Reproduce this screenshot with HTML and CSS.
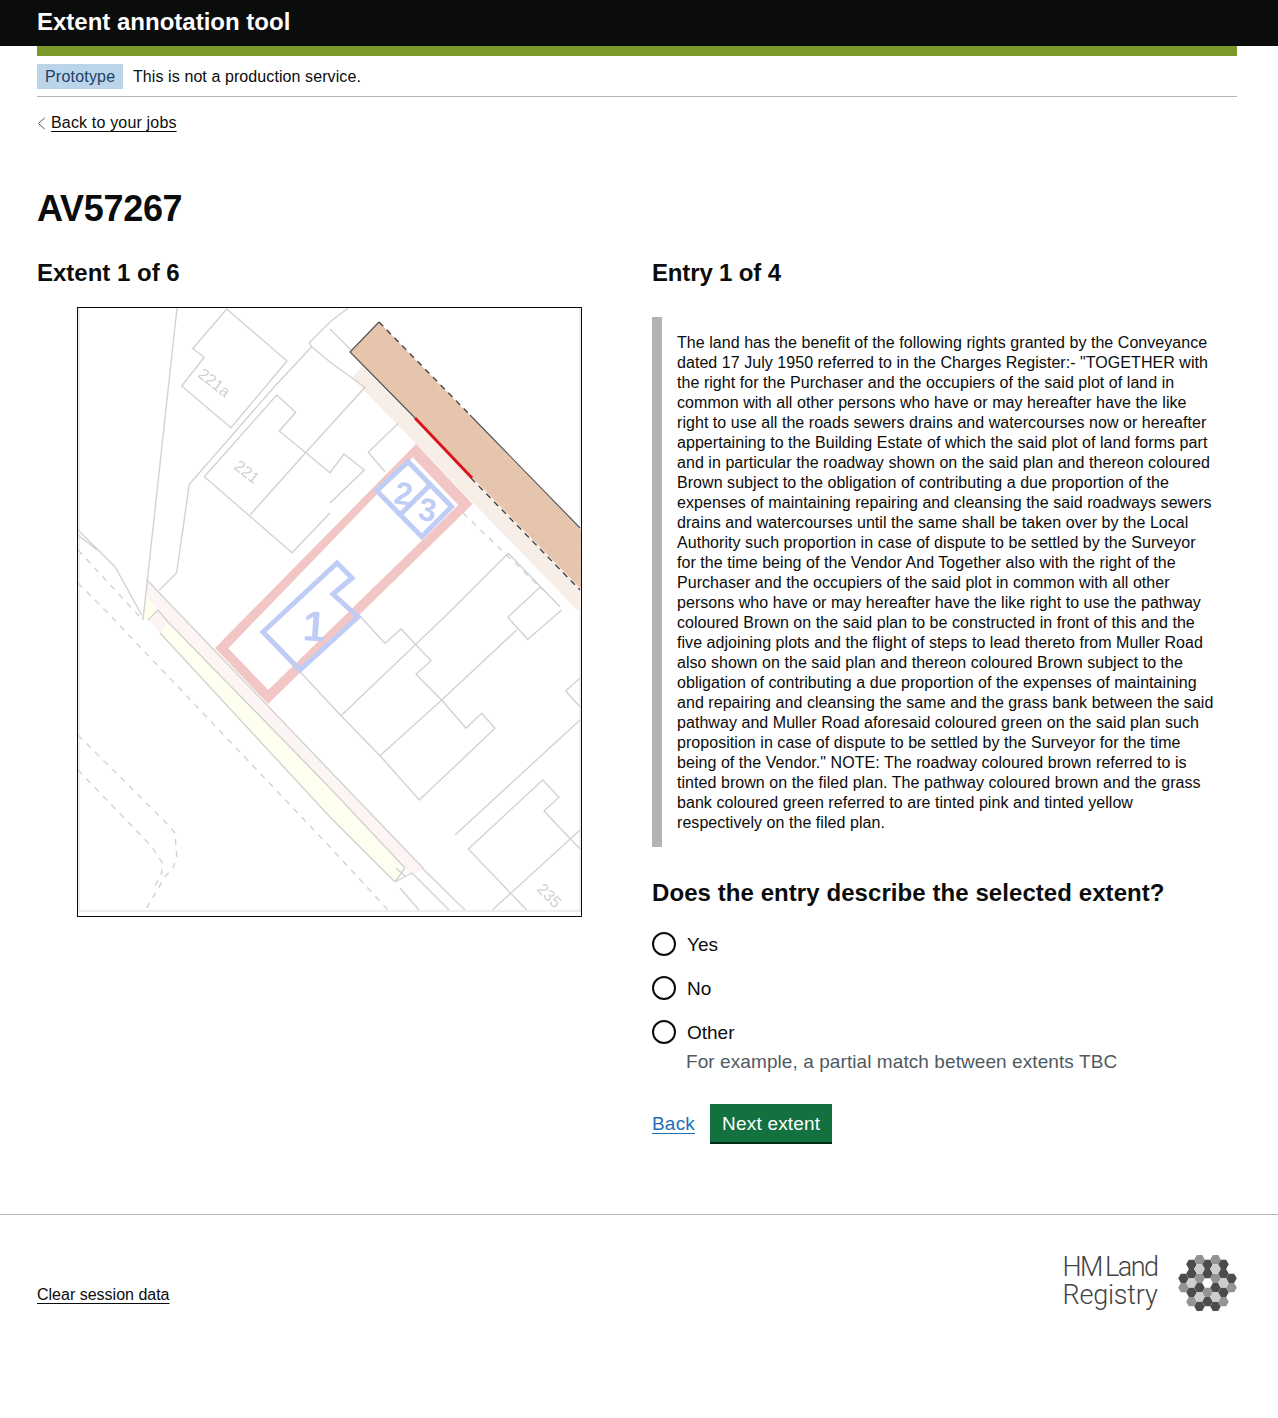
FILE: index.html
```html
<!DOCTYPE html>
<html lang="en">
<head>
<meta charset="utf-8">
<title>Extent annotation tool</title>
<link rel="stylesheet" href="styles.css">
</head>
<body>
<header class="topbar"><div class="topbar-title">Extent annotation tool</div></header>
<div class="container">
  <div class="accent"></div>
  <div class="phase"><strong class="tag">Prototype</strong><span class="phase-text">This is not a production service.</span></div>
  <a class="back" href="#"><svg class="chev" viewBox="0 0 9 13" width="9" height="13"><path d="M7.8 .8 1.4 6.5l6.4 5.7"/></svg><span class="link">Back to your jobs</span></a>
  <h1 class="title">AV57267</h1>
  <main class="grid">
    <section>
      <h2 class="heading">Extent 1 of 6</h2>
      <svg class="map" viewBox="78 308 503 608" width="503" height="608">
        <defs>
          <pattern id="hatch" width="2" height="2" patternUnits="userSpaceOnUse" patternTransform="rotate(45)">
            <rect width="2" height="2" fill="#ebccb6"/><rect width="1" height="2" fill="#e2bea5"/>
          </pattern>
        </defs>
        <g class="soft">
          <path class="edge" d="M79 308V911H581M580 308V911"/>
          <!-- tinted road strips -->
          <polygon class="tint-pale" points="147,580 423,868 412,876 405,868 330,788 168,622 158,610 145,595"/>
          <polygon class="tint-pale" points="158,610 168,622 160,633 148,620"/>
          <polygon class="tint-yellow" points="168,622 330,788 405,868 395,882 330,817 160,633"/>
          <polygon class="tint-yellow" points="145,595 158,610 148,620 143,619"/>
          <polygon class="tint-road" points="362,366 581,589 581,614 352,378"/>
          <!-- plot lines -->
          <path class="ln" d="M177 308 143 620"/>
          <path class="ln" d="M226.7 309 287 361 231 427.7 181.7 386 204.3 357.3 192.7 348.7Z"/>
          <path class="ln" d="M159.3 590 176.7 572.7 189.3 484.3 275 386 311.7 346.7 330 362 352 378M311.7 346.7 309.3 342.7 330 322 348 308M330 329 351 350"/>
          <path class="ln" d="M204.3 476.7 276.7 395 295.7 412.3 279.3 431 330 472.7 344 454 364.3 470 330 503M204.3 476.7 292 552.7 330 513M250 515 306 452.3 365 387.3 352 378"/>
          <path class="ln" d="M385 471.7 368.3 452.3 398.3 423.3"/>
          <path class="ln" d="M147 580 423 868M168 622 330 788 405 868M160 633 330 817 395 882M158 610 168 622M148 620 158 610M405 868 395 882M400 888 419 910M412 873 449 910M422 868 465 910M395 882 412 873M406 877 396 868"/>
          <path class="ln" d="M300 671.7 341 715.7 380 755.7 419.3 800 495 728.3 481.7 713.3 466 728.3 441.7 700 416 674.3 431 660.7 401 629 385 643.3 359 615"/>
          <path class="ln" d="M341 715.7 451.7 610 508.3 553.3 560 606.7M380 755.7 441.7 700 516.7 630M507.7 617.3 540 587.3M507.7 617.3 527.7 639.3 561.7 610"/>
          <path class="ln" d="M455 835 580 720M580 678 565.7 691 580 706.7"/>
          <path class="ln" d="M526.7 910 468.3 849 542.7 780 559 797.3 544 811 580 849M492.3 910 580 830"/>
          <path class="ln" d="M78 530 115 566.7 141.7 615M78 535 97 550"/>
          <path class="ln dash" d="M78 550 140 617"/>
          <path class="ln dash" d="M78 583 106 611 330 847 388 910"/>
          <path class="ln dash" d="M78 735 168.3 825 175 833 176.7 856.7 173 868 165 876.7 146.7 908"/>
          <path class="ln dash" d="M78 770 151.7 846.7 161.7 861.7 161.7 873 155 886"/>
          <path class="ln dash" d="M463 513 543 590"/>
          <text class="lot" transform="translate(197 376) rotate(38)">221a</text>
          <text class="lot" transform="translate(233 468) rotate(38)">221</text>
          <text class="lot" transform="translate(536 890) rotate(45)">235</text>
          <!-- red extent -->
          <path class="pink" fill-rule="evenodd" d="M416 444 472.7 504 268 704 215 648ZM412.7 457.3 228.3 648.3 268.3 690 458.3 505Z"/>
          <!-- blue numbered extents -->
          <path class="blue" d="M263 632 337 563 352 578 333 594 358 617 300 670Z"/>
          <path class="blue" d="M408.3 461.7 376.7 490.7 421.7 536.7 451.7 506.7ZM430 485 401.7 513.3"/>
          <text class="num num-large" transform="translate(302 640) rotate(4)">1</text>
          <text class="num" transform="translate(393 503) rotate(10)">2</text>
          <text class="num" transform="translate(417 519) rotate(10)">3</text>
          <!-- brown roadway -->
          <polygon fill="url(#hatch)" points="379,322 581,530 581,589 350,352"/>
          <path class="solid" d="M470 415 580 528M379 322 350 352 415 418"/>
          <path class="dashy" d="M379 322 470 415M471 478 580 590"/>
          <path class="redline" d="M415 418 472 478"/>
        </g>
      </svg>
    </section>
    <section>
      <h2 class="heading heading-entry">Entry 1 of 4</h2>
      <div class="inset">The land has the benefit of the following rights granted by the Conveyance<br>dated 17 July 1950 referred to in the Charges Register:- "TOGETHER with<br>the right for the Purchaser and the occupiers of the said plot of land in<br>common with all other persons who have or may hereafter have the like<br>right to use all the roads sewers drains and watercourses now or hereafter<br>appertaining to the Building Estate of which the said plot of land forms part<br>and in particular the roadway shown on the said plan and thereon coloured<br>Brown subject to the obligation of contributing a due proportion of the<br>expenses of maintaining repairing and cleansing the said roadways sewers<br>drains and watercourses until the same shall be taken over by the Local<br>Authority such proportion in case of dispute to be settled by the Surveyor<br>for the time being of the Vendor And Together also with the right of the<br>Purchaser and the occupiers of the said plot in common with all other<br>persons who have or may hereafter have the like right to use the pathway<br>coloured Brown on the said plan to be constructed in front of this and the<br>five adjoining plots and the flight of steps to lead thereto from Muller Road<br>also shown on the said plan and thereon coloured Brown subject to the<br>obligation of contributing a due proportion of the expenses of maintaining<br>and repairing and cleansing the same and the grass bank between the said<br>pathway and Muller Road aforesaid coloured green on the said plan such<br>proposition in case of dispute to be settled by the Surveyor for the time<br>being of the Vendor." NOTE: The roadway coloured brown referred to is<br>tinted brown on the filed plan. The pathway coloured brown and the grass<br>bank coloured green referred to are tinted pink and tinted yellow<br>respectively on the filed plan.</div>
      <h2 class="question">Does the entry describe the selected extent?</h2>
      <form class="choices">
        <label class="choice"><input class="radio" type="radio" name="match"><span class="choice-text">Yes</span></label>
        <label class="choice"><input class="radio" type="radio" name="match"><span class="choice-text">No</span></label>
        <label class="choice"><input class="radio" type="radio" name="match"><span class="choice-text">Other</span></label>
        <p class="hint">For example, a partial match between extents TBC</p>
      </form>
      <div class="actions"><a class="link-blue" href="#">Back</a><a class="button" href="#">Next extent</a></div>
    </section>
  </main>
</div>
<footer class="footer">
  <a class="footer-link" href="#">Clear session data</a>
  <div class="logo">
    <div class="logo-text"><div class="logo-line-top">HM Land</div><div class="logo-line-bottom">Registry</div></div>
    <svg class="crest" viewBox="0.5 0 59.5 56" width="59.5" height="56">
      <defs><polygon id="hex" points="5.3,0 2.65,4.6 -2.65,4.6 -5.3,0 -2.65,-4.6 2.65,-4.6"/></defs>
      <use href="#hex" class="hd" x="6" y="23.3"/><use href="#hex" class="hm" x="6" y="32.7"/>
      <use href="#hex" class="hd" x="14" y="9.3"/><use href="#hex" class="hd" x="14" y="18.7"/><use href="#hex" class="hl" x="14" y="28"/><use href="#hex" class="hd" x="14" y="37.3"/><use href="#hex" class="hm" x="14" y="46.7"/>
      <use href="#hex" class="hm" x="22" y="4.6"/><use href="#hex" class="hl" x="22" y="14"/><use href="#hex" class="hm" x="22" y="23.3"/><use href="#hex" class="hd" x="22" y="32.7"/><use href="#hex" class="hl" x="22" y="42"/><use href="#hex" class="hd" x="22" y="51.4"/>
      <use href="#hex" class="hd" x="30" y="9.3"/><use href="#hex" class="hd" x="30" y="18.7"/><use href="#hex" class="hm" x="30" y="37.3"/><use href="#hex" class="hd" x="30" y="46.7"/>
      <use href="#hex" class="hm" x="38" y="4.6"/><use href="#hex" class="hl" x="38" y="14"/><use href="#hex" class="hm" x="38" y="23.3"/><use href="#hex" class="hd" x="38" y="32.7"/><use href="#hex" class="hl" x="38" y="42"/><use href="#hex" class="hd" x="38" y="51.4"/>
      <use href="#hex" class="hd" x="46" y="9.3"/><use href="#hex" class="hd" x="46" y="18.7"/><use href="#hex" class="hl" x="46" y="28"/><use href="#hex" class="hd" x="46" y="37.3"/><use href="#hex" class="hm" x="46" y="46.7"/>
      <use href="#hex" class="hd" x="54" y="23.3"/><use href="#hex" class="hm" x="54" y="32.7"/>
    </svg>
  </div>
</footer>
</body>
</html>
```
FILE: styles.css
```css
* { box-sizing: border-box; }
html, body { margin: 0; padding: 0; }
body {
  min-height: 1418px;
  font-family: "Liberation Sans", Arial, sans-serif;
  font-size: 16px;
  line-height: 20px;
  color: #0b0c0c;
  background: #fff;
}
.topbar { height: 46px; background: #0b0c0c; padding: 8px 37px 0; }
.topbar-title { color: #fff; font-weight: 700; font-size: 24px; line-height: 27px; }
.container { margin: 0 41px 0 37px; }
.accent { height: 10px; background: #7b992b; }
.phase {
  display: flex; align-items: center; gap: 10px;
  height: 41px; padding-top: 1px;
  border-bottom: 1px solid #b1b4b6;
}
.phase-text { letter-spacing: .09px; }
.tag {
  display: block; height: 25px; width: 86px; padding: 3px 8px 0;
  background: #bbd4ea; color: #1c3f66; font-weight: 400; letter-spacing: .2px;
}
.back { display: flex; align-items: center; gap: 5px; margin-top: 16px; color: #0b0c0c; text-decoration: none; width: max-content; }
.chev { fill: none; stroke: #505a5f; stroke-width: 1; }
.link { text-decoration: underline; text-underline-offset: 3px; letter-spacing: .17px; }
.title { margin: 54px 0 0; font-size: 36px; line-height: 44px; font-weight: 700; letter-spacing: -.3px; }
.grid { display: grid; grid-template-columns: 615px 1fr; margin-top: 27px; }
.heading { margin: 0; font-size: 24px; line-height: 30px; font-weight: 700; }
.heading-entry { letter-spacing: -.15px; }
.map {
  display: block; box-sizing: content-box;
  margin: 19px 0 0 40px;
  border: 1px solid #0b0c0c;
  overflow: hidden;
}
.soft { filter: blur(.3px); }
.edge { fill: none; stroke: #ddd; stroke-width: 1; }
.ln { fill: none; stroke: #d2d2d2; stroke-width: 1.4; }
.dash { stroke-dasharray: 6 6; }
.tint-pale { fill: #fdf5f4; }
.tint-yellow { fill: #fffff0; }
.tint-road { fill: #f8eee8; }
.lot { font-size: 16px; fill: #cfcfd4; font-family: "Liberation Sans", Arial, sans-serif; }
.pink { fill: #f3c6c6; }
.blue { fill: none; stroke: #bfcdf6; stroke-width: 5; }
.num { font-size: 32px; font-weight: 700; fill: #bfcdf6; font-family: "Liberation Sans", Arial, sans-serif; }
.num-large { font-size: 42px; }
.solid { fill: none; stroke: #555; stroke-width: 1.2; }
.dashy { fill: none; stroke: #444; stroke-width: 1.4; stroke-dasharray: 6 5; }
.redline { fill: none; stroke: #d8141c; stroke-width: 3; }
.inset {
  margin-top: 29px; padding: 16px 15px 14px;
  border-left: 10px solid #b1b4b6;
  white-space: nowrap;
  letter-spacing: .05px;
}
.question { margin: 31px 0 0; font-size: 24px; line-height: 30px; font-weight: 700; letter-spacing: .07px; }
.choices { margin: 24px 0 0; display: flex; flex-direction: column; }
.choice { display: flex; align-items: center; gap: 11px; height: 24px; margin-bottom: 20px; font-size: 19px; line-height: 24px; }
.choice:nth-of-type(3) { margin-bottom: 0; }
.choice-text { padding-top: 2px; }
.radio {
  appearance: none; -webkit-appearance: none; margin: 0;
  width: 24px; height: 24px; border: 2px solid #0b0c0c; border-radius: 50%; background: #fff;
}
.hint { margin: 5px 0 0 34px; font-size: 19px; line-height: 25px; color: #505a5f; letter-spacing: .08px; }
.actions { display: flex; align-items: center; gap: 15px; margin-top: 30px; font-size: 19px; }
.link-blue { color: #1d70b8; text-decoration: underline; text-underline-offset: 3px; letter-spacing: .2px; }
.button {
  display: block; height: 40px; padding: 9px 12px 0;
  background: #13703f; color: #fff; text-decoration: none;
  box-shadow: inset 0 -2px 0 #002d18; line-height: 22px; letter-spacing: .2px;
}
.footer {
  margin-top: 70px; border-top: 1px solid #b1b4b6;
  display: flex; justify-content: space-between; align-items: flex-start;
  padding: 38px 41px 0 37px;
}
.footer-link { margin-top: 32px; color: #0b0c0c; text-underline-offset: 3px; }
.logo { display: flex; gap: 18px; align-items: center; }
.logo-text { width: 97px; padding-bottom: 4px; font-family: Roboto, "Open Sans", sans-serif; font-weight: 300; font-size: 27px; line-height: 28px; color: #444; white-space: nowrap; }
.logo-line-top { letter-spacing: -1.5px; word-spacing: -2px; }
.logo-line-bottom { letter-spacing: -.2px; }
.crest { display: block; }
.hd { fill: #4c4c4c; }
.hm { fill: #949494; }
.hl { fill: #cdcdcd; }
```
